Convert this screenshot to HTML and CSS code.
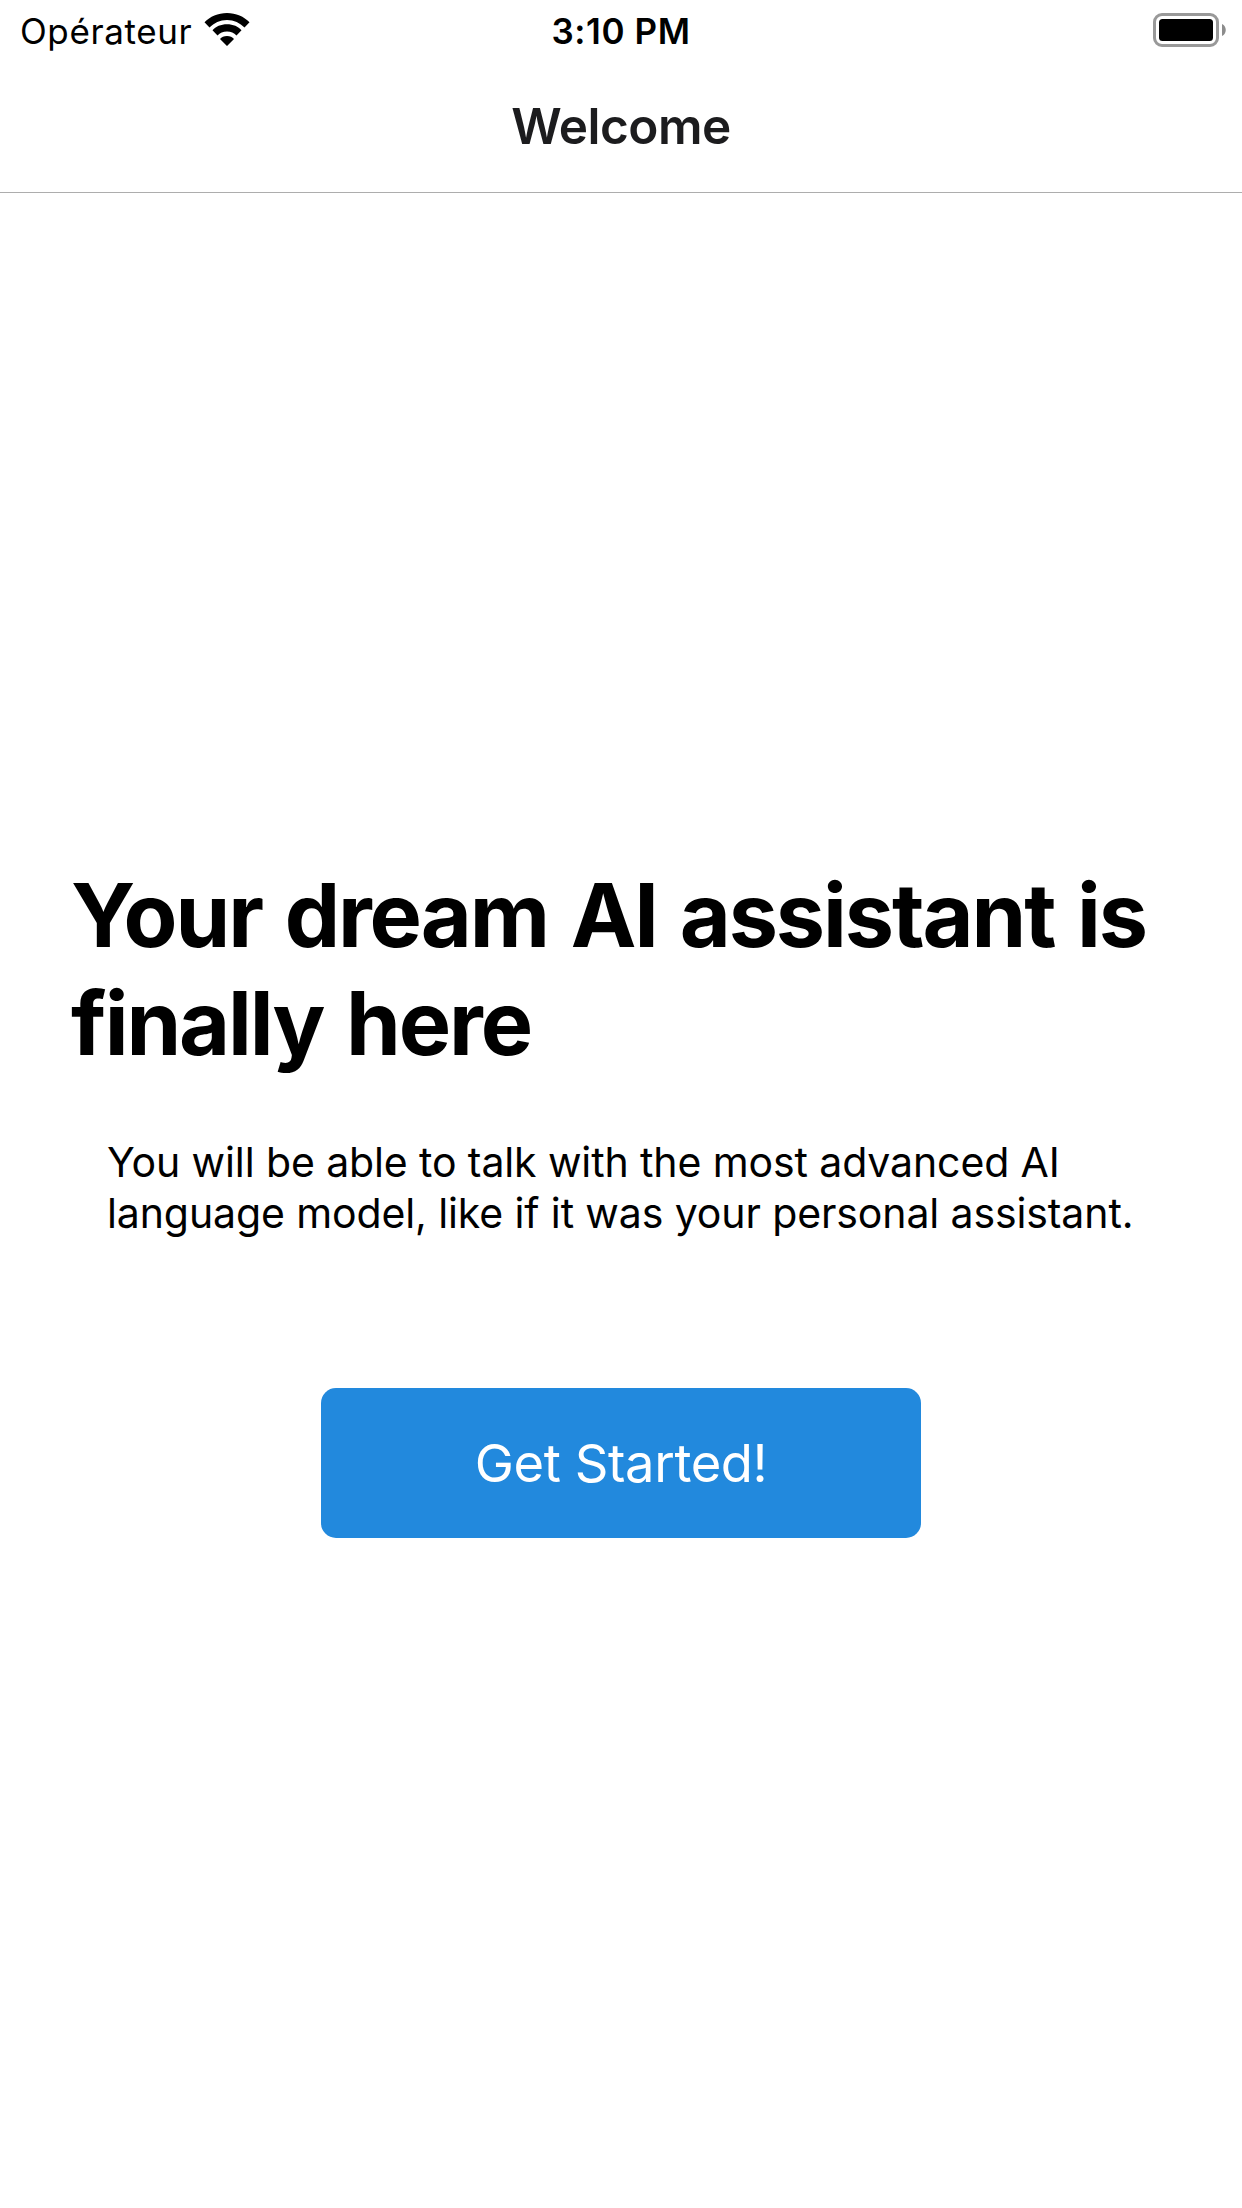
FILE: index.html
```html
<!DOCTYPE html>
<html lang="en">
<head>
<meta charset="utf-8">
<title>Welcome</title>
<link rel="stylesheet" href="styles.css">
</head>
<body>
<div class="status">
  <div class="carrier"><span class="carrier-name">Opérateur</span>
    <svg class="wifi" width="46" height="34" viewBox="0 0 46 34"><path d="M23 0C32 0 40 3.500 45.500 9.300L40.500 14.500C36 10 30 7 23 7S10 10 5.500 14.500L0.500 9.300C6 3.500 14 0 23 0ZM23 11.200C29 11.200 34.400 13.500 37.500 17.200L32.500 22.500C30 20 27 18.500 23 18.500S16 20 13.500 22.500L8.500 17.200C11.600 13.500 17 11.200 23 11.200ZM23 23C26 23 28.500 24 30 26L23 33L16 26C17.500 24 20 23 23 23Z"/></svg>
  </div>
  <div class="time">3:10 PM</div>
  <svg class="battery" width="73" height="34" viewBox="0 0 73 34"><rect x="1.500" y="1.500" width="63" height="31" rx="7.500" fill="none" stroke="#999" stroke-width="3"/><rect x="6" y="6" width="54" height="22" rx="3.500"/><path d="M69 11C74 13 74 21 69 23Z" fill="#8c8c8c"/></svg>
</div>
<header class="nav"><span class="nav-title">Welcome</span></header>
<main class="main">
  <h1 class="headline">Your dream AI assistant is<br>finally here</h1>
  <p class="intro">You will be able to talk with the most advanced AI<br>language model, like if it was your personal assistant.</p>
  <button class="start">Get Started!</button>
</main>
</body>
</html>
```
FILE: styles.css
```css
* { box-sizing: border-box; }
body { margin: 0; height: 2208px; background: #fff; color: #000; font-family: Inter, sans-serif; display: flex; flex-direction: column; }
.status { height: 60px; padding: 0 16px 0 20px; display: grid; grid-template-columns: 1fr auto 1fr; align-items: center; font-size: 35px; line-height: 60px; letter-spacing: 0.6px; }
.carrier { display: flex; align-items: center; gap: 12px; padding-top: 1px; }
.wifi { margin-bottom: 2px; }
.time { font-weight: 600; padding: 1px 4px 0 0; }
.battery { justify-self: end; margin-bottom: 1px; }
.nav { height: 133px; border-bottom: 1px solid #adadad; display: flex; justify-content: center; align-items: center; font-size: 49.5px; font-weight: 600; letter-spacing: -0.5px; color: #1c1c1e; }
.main { padding: 668px 71px 0; display: flex; flex-direction: column; }
.headline { margin: 0; font-size: 88px; line-height: 108px; font-weight: 700; letter-spacing: -2.1px; word-spacing: 4px; white-space: nowrap; }
.intro { margin: 60px 0 0 36px; font-size: 41px; line-height: 51px; letter-spacing: -0.11px; white-space: nowrap; }
.start { align-self: center; margin-top: 149px; width: 600px; height: 150px; border: 0; border-radius: 15px; background: #2289dd; color: #fff; font-family: inherit; font-size: 52.5px; letter-spacing: -0.4px; }
```
